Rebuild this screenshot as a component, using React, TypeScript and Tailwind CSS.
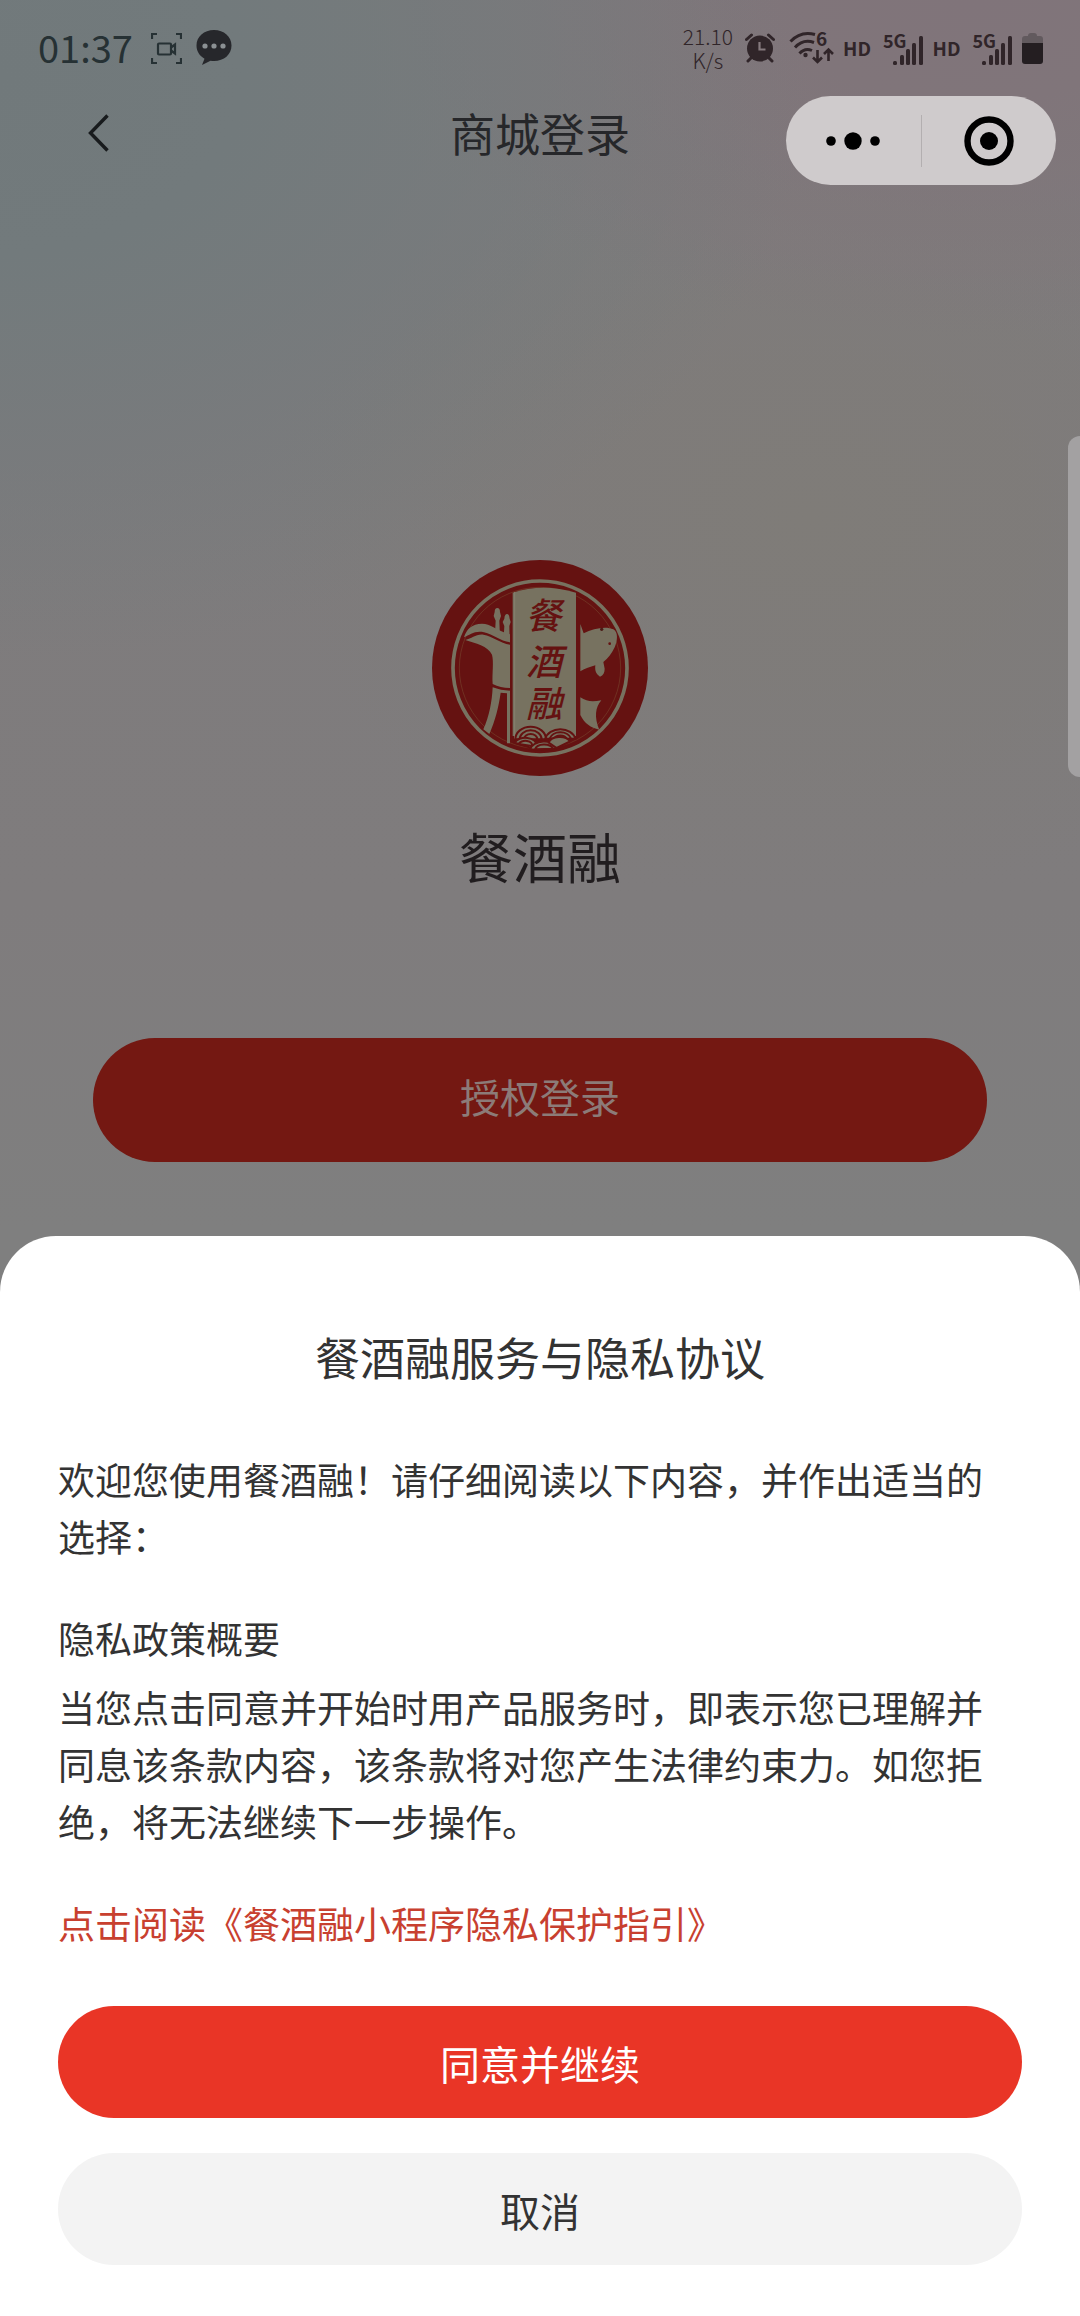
const FONT = 'font-["Noto_Sans_CJK_SC",sans-serif]'

const PILL_BUTTON = 'w-full h-[112px] rounded-full text-[40px] leading-[60px] pt-[2px]'

const BARS = [
  { x: 0, y: 25, h: 4 },
  { x: 7, y: 19, h: 10 },
  { x: 13, y: 13, h: 16 },
  { x: 19, y: 7, h: 22 },
  { x: 26, y: 0, h: 29 },
]

function RecordIcon() {
  return (
    <svg className="w-[31px] h-[31px]" viewBox="0 0 31 31" fill="none" stroke="currentColor" strokeWidth={2.2}>
      <path d="M1 6V1h5M25 1h5v5M30 25v5h-5M6 30H1v-5" />
      <rect x="7" y="10.500" width="13" height="11" rx="1" />
      <path d="M20 14.500l4-3v9l-4-3" />
    </svg>
  )
}

function ChatIcon() {
  return (
    <svg className="w-[36px] h-[36px]" viewBox="0 0 36 36">
      <path
        fill="#26272b"
        d="M18 0C8 0 .5 6.500.5 15.500c0 6 3.200 10.500 8 13.200L6 35l8.500-4.300c1.200.2 2.300.3 3.500.3 10 0 17.500-6.500 17.500-15.500S28 0 18 0z"
      />
      <g fill="#8b9093">
        <circle cx="9" cy="16" r="2.600" />
        <circle cx="18" cy="16" r="2.600" />
        <circle cx="27" cy="16" r="2.600" />
      </g>
    </svg>
  )
}

function AlarmIcon() {
  return (
    <svg className="w-[30px] h-[30px]" viewBox="0 0 30 30" fill="none" stroke="currentColor" strokeLinecap="round">
      <circle cx="15" cy="15.500" r="13" fill="currentColor" stroke="none" />
      <path d="M1.500 6.500L6.500 2M28.500 6.500L23.500 2" strokeWidth={3} />
      <path d="M6 25l-3 3M24 25l3 3" strokeWidth={3} />
      <path d="M14.500 9v7.500h6" stroke="#857a7e" strokeWidth={2.2} strokeLinecap="butt" />
    </svg>
  )
}

function WifiIcon() {
  return (
    <svg
      className="w-[46px] h-[34px] overflow-visible"
      viewBox="0 0 46 34"
      fill="none"
      stroke="currentColor"
      strokeWidth={3}
    >
      <path d="M1.500 10.500C8 3.500 17 1 26 3.500" />
      <path d="M6 16.500c5-5.500 12-7.500 19-5" />
      <path d="M10.500 22.500c3.500-4 8-5 12.500-3" />
      <circle cx="16.500" cy="24" r="2.200" fill="currentColor" stroke="none" />
      <text
        x="27"
        y="15"
        fill="currentColor"
        stroke="none"
        className='font-["Noto_Sans_CJK_SC",sans-serif] text-[19px] font-bold'
      >
        6
      </text>
      <path d="M28.500 19v12M24 26.500l4.500 4.500 4.500-4.500" strokeWidth={2.6} />
      <path d="M39.500 30V18.500M35 23l4.500-4.500L44 23" strokeWidth={2.6} />
    </svg>
  )
}

function Signal() {
  return (
    <div className="flex items-end h-[34px]">
      <span className="self-start h-[18px] leading-[18px] text-[18px] font-bold">5G</span>
      <svg className="w-[30px] h-[29px] -ml-[14px] mt-1" viewBox="0 0 30 29" fill="currentColor">
        {BARS.map((bar) => (
          <rect key={bar.x} x={bar.x} y={bar.y} width="4" height={bar.h} rx="1.500" />
        ))}
      </svg>
    </div>
  )
}

function BatteryIcon() {
  return (
    <svg className="w-[21px] h-[31px]" viewBox="0 0 21 31">
      <path fill="#625a5e" d="M6 3q0-3 3-3h3q3 0 3 3h3q3 0 3 3v5H0V6q0-3 3-3z" />
      <path fill="#241e21" d="M0 10h21v18q0 3-3 3H3q-3 0-3-3z" />
    </svg>
  )
}

function StatusBar() {
  return (
    <div className="h-[80px] pl-[38px] pr-[37px] pt-4 flex items-center justify-between">
      <div className="flex items-center text-[#263134]">
        <span className="text-[38px] leading-[38px] pb-[2px] mr-[18px]">01:37</span>
        <RecordIcon />
        <span className="ml-[14px]">
          <ChatIcon />
        </span>
      </div>
      <div className="flex items-center text-[#302529]">
        <div className="text-[21px] leading-[24px] text-center font-light mr-3">
          21.10
          <br />
          K/s
        </div>
        <AlarmIcon />
        <span className="ml-[14px] mr-2">
          <WifiIcon />
        </span>
        <span className="text-[19px] leading-[20px] font-bold mr-3">HD</span>
        <Signal />
        <span className="text-[19px] leading-[20px] font-bold ml-[10px] mr-3">HD</span>
        <Signal />
        <span className="ml-[10px]">
          <BatteryIcon />
        </span>
      </div>
    </div>
  )
}

function NavBar() {
  return (
    <header className="h-[90px] pl-[84px] pr-6 grid grid-cols-[1fr_auto_1fr] items-center">
      <div className="-mr-[60px]">
        <button type="button" aria-label="返回" className="block">
          <svg className="w-7 h-10" viewBox="0 0 28 40" fill="none" stroke="#181b1d" strokeWidth={3.4}>
            <path d="M23.500 2.500L6.500 20l17 17.500" />
          </svg>
        </button>
      </div>
      <h1 className="text-[45px] leading-[66px] text-[#26272a] -translate-x-[30px]">商城登录</h1>
      <div className="justify-self-end mt-4 w-[270px] h-[89px] rounded-full bg-[#cfcbcc] flex items-center">
        <button type="button" aria-label="更多" className="flex-1 flex justify-center">
          <svg className="w-[54px] h-[20px]" viewBox="0 0 54 20">
            <circle cx="5" cy="10" r="4.800" />
            <circle cx="27" cy="10" r="8.700" />
            <circle cx="49" cy="10" r="4.800" />
          </svg>
        </button>
        <span className="w-px h-[52px] bg-[#b3afb0]" />
        <button type="button" aria-label="关闭" className="flex-1 flex justify-center">
          <svg className="w-[50px] h-[50px]" viewBox="0 0 50 50">
            <circle cx="25" cy="25" r="21.500" fill="none" stroke="#000" strokeWidth={6.4} />
            <circle cx="25" cy="25" r="9" />
          </svg>
        </button>
      </div>
    </header>
  )
}

function Logo() {
  return (
    <svg className="w-[216px] h-[216px]" viewBox="36 30 648 648">
      <circle cx="360" cy="354" r="324" fill="#651211" />
      <circle cx="360" cy="354" r="261" fill="none" stroke="#777260" strokeWidth="11" />
      <circle cx="360" cy="354" r="242" fill="none" stroke="#76402a" strokeWidth="2" />

      {/* wine vessel */}
      <g fill="#777260">
        <path d="M132 262C140 236 156 222 186 221c26 0 42 20 84 32v24c-30-4-50-24-78-30-28-6-42 8-60 15z" />
        <path d="M136 270c20-4 30-18 54-16 28 4 50 26 80 30v130c-20 0-36-4-52-12-2-32 4-66-2-88-12-26-50-34-80-44z" />
        <path d="M218 412c16 6 34 10 52 10v158h-9V430l-19-2c-6 42-16 84-34 124l-18-14c18-38 26-84 28-126z" />
        <path d="M225 250l2-38-6-14 3-12q0-12 8-12t8 12l3 12-5 14 2 48z" />
        <path d="M251 264l2-36-5-12 5-10q1-14 8-14t8 14l3 10-4 12 1 44z" />
      </g>

      {/* fish */}
      <g fill="#777260">
        <path d="M481 222l10 28C520 234 560 228 580 238c15 8 13 34 4 54-8 18-20 34-34 44l4 20c0 12-4 20-14 24-12-8-16-18-14-34-16 6-30 8-45 18z" />
        <path d="M481 442c20 14 38 14 63 9-18 20-22 52-6 88-26-6-44-18-57-44z" />
      </g>
      <circle cx="545" cy="238" r="5" fill="#4a1a15" />
      <circle cx="569" cy="281" r="4" fill="#651211" />

      {/* tablet */}
      <path d="M278 128q90-30 190 0v430H278z" fill="#777260" />
      <path d="M284 126v440" stroke="#857f6f" strokeWidth="3" />
      <g
        fill="#651211"
        textAnchor="middle"
        className='font-["Noto_Sans_CJK_SC",sans-serif] text-[108px] font-medium italic'
      >
        <text x="370" y="236">餐</text>
        <text x="372" y="376">酒</text>
        <text x="372" y="502">融</text>
      </g>

      {/* waves */}
      <g fill="#777260" stroke="#651211" strokeWidth="6">
        <path d="M286 568a46 38 0 0 1 92 0z" />
        <path d="M299 568a33 27 0 0 1 66 0z" />
        <path d="M312 568a20 16 0 0 1 40 0z" />
        <path d="M376 566a46 36 0 0 1 90 0z" />
        <path d="M389 566a33 25 0 0 1 64 0z" />
        <path d="M402 566a20 14 0 0 1 38 0z" />
        <path d="M284 578a34 22 0 0 1 66 8l-20 6z" />
        <path d="M296 582a20 12 0 0 1 40 6z" />
        <path d="M330 598a44 30 0 0 1 84-4q-42 10-84 4z" />
        <path d="M345 598a28 18 0 0 1 54-2z" />
        <path d="M386 578a34 22 0 0 1 64-4l-40 20z" />
      </g>
    </svg>
  )
}

function PrivacySheet() {
  return (
    <section
      role="dialog"
      aria-labelledby="sheet-title"
      className="relative -mt-[56px] bg-white rounded-t-[56px] px-[58px] pt-[88px] pb-[51px] text-[37px] leading-[57px] text-[#333333]"
    >
      <h2 id="sheet-title" className="text-[45px] leading-[66px] text-center mb-[61px]">
        餐酒融服务与隐私协议
      </h2>
      <div className="pr-1">
        <p className="mb-[45px]">欢迎您使用餐酒融！请仔细阅读以下内容，并作出适当的选择：</p>
        <h3 className="mb-3">隐私政策概要</h3>
        <p className="mb-[45px]">
          当您点击同意并开始时用产品服务时，即表示您已理解并同息该条款内容，该条款将对您产生法律约束力。如您拒绝，将无法继续下一步操作。
        </p>
        <a href="#privacy" className="block mb-[54px] text-[#c8402f]">
          点击阅读《餐酒融小程序隐私保护指引》
        </a>
      </div>
      <div className="grid gap-[35px]">
        <button type="button" className={`${PILL_BUTTON} bg-[#e93526] text-white`}>
          同意并继续
        </button>
        <button type="button" className={`${PILL_BUTTON} bg-[#f3f3f3]`}>
          取消
        </button>
      </div>
    </section>
  )
}

export default function App() {
  return (
    <div className={`${FONT} min-h-screen bg-white`}>
      <div className="relative bg-[radial-gradient(ellipse_75%_45%_at_0%_6%,#71797b_0%,#727a7c_30%,transparent_100%),radial-gradient(ellipse_60%_26%_at_90%_0%,#80747a_0%,#80757a_30%,transparent_100%),radial-gradient(ellipse_50%_30%_at_75%_40%,#7f7c78_0%,transparent_100%),linear-gradient(#7d7b7c_0%,#7f7c7d_70%,#7f7f7f_95%)]">
        <StatusBar />
        <NavBar />
        <main className="px-[93px] pt-[390px] pb-[130px] flex flex-col items-center">
          <Logo />
          <p className="mt-[40px] mb-[142px] text-[54px] leading-[80px] text-[#211d1f]">餐酒融</p>
          <button
            type="button"
            className="w-full h-[124px] rounded-full bg-[#741812] text-[#8c7b78] text-[40px] leading-[60px] pb-2"
          >
            授权登录
          </button>
        </main>
        <div className="absolute right-0 top-[436px] w-3 h-[341px] rounded-l-xl bg-[#a3a1a2]" />
      </div>
      <PrivacySheet />
    </div>
  )
}
